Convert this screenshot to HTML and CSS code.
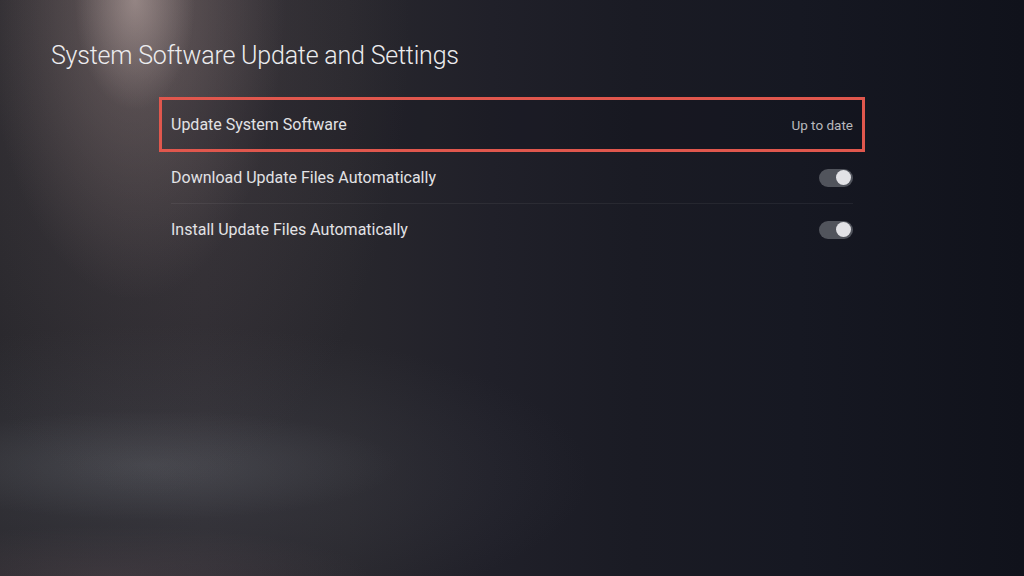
FILE: index.html
```html
<!DOCTYPE html>
<html lang="en">
<head>
<meta charset="utf-8">
<title>System Software Update and Settings</title>
<link rel="stylesheet" href="styles.css">
</head>
<body>
<main class="screen">
  <h1 class="screen-title">System Software Update and Settings</h1>
  <ul class="settings-list">
    <li class="setting-row is-focused">
      <span class="setting-label">Update System Software</span>
      <span class="setting-value">Up to date</span>
    </li>
    <li class="setting-row">
      <span class="setting-label">Download Update Files Automatically</span>
      <span class="toggle is-on"><span class="toggle-knob"></span></span>
    </li>
    <li class="row-divider" aria-hidden="true"></li>
    <li class="setting-row">
      <span class="setting-label">Install Update Files Automatically</span>
      <span class="toggle is-on"><span class="toggle-knob"></span></span>
    </li>
  </ul>
</main>
</body>
</html>
```

FILE: styles.css
```css
* {
  box-sizing: border-box;
}

html,
body {
  margin: 0;
  width: 1024px;
  height: 576px;
  overflow: hidden;
}

body {
  font-family: Roboto, "Open Sans", "Liberation Sans", sans-serif;
  color: #e6e6e9;
  background:
    /* spotlight from the top-left */
    radial-gradient(ellipse 60px 110px at 135px 0px, rgba(195, 176, 172, 0.5), rgba(195, 176, 172, 0) 100%),
    radial-gradient(ellipse 150px 300px at 135px 0px, rgba(150, 130, 128, 0.45), rgba(150, 130, 128, 0) 100%),
    radial-gradient(ellipse 260px 480px at 150px 20px, rgba(100, 88, 90, 0.35), rgba(100, 88, 90, 0) 100%),
    /* haze near the floor */
    radial-gradient(ellipse 250px 55px at 150px 465px, rgba(120, 124, 130, 0.24), rgba(120, 124, 130, 0) 100%),
    radial-gradient(ellipse 430px 150px at 160px 475px, rgba(80, 82, 90, 0.35), rgba(80, 82, 90, 0) 100%),
    radial-gradient(ellipse 260px 50px at 110px 576px, rgba(90, 74, 80, 0.35), rgba(90, 74, 80, 0) 100%),
    /* base wash, dark navy to the right */
    linear-gradient(90deg, #28272c 0%, #2c2a30 20%, #28272d 34%, #202029 48%, #1a1b24 62%, #161822 78%, #10121b 100%);
}

.screen {
  display: flex;
  flex-direction: column;
  padding: 38px 0 0 51px;
}

.screen-title {
  margin: 0;
  font-size: 25px;
  font-weight: 300;
  line-height: 36px;
  letter-spacing: -0.2px;
  color: #ececee;
}

.settings-list {
  list-style: none;
  margin: 23px 0 0 108px;
  padding: 0;
  width: 706px;
  display: flex;
  flex-direction: column;
}

.setting-row {
  height: 51px;
  padding: 0 12px;
  display: flex;
  align-items: center;
  justify-content: space-between;
}

.setting-row.is-focused {
  height: 55px;
  padding: 0 9px;
  border: 3px solid #e0574d;
  background: rgba(16, 16, 24, 0.2);
}

.setting-label {
  font-size: 16px;
  font-weight: 400;
  color: #e2e2e5;
}

.setting-value {
  font-size: 13.5px;
  color: #b9b9bd;
}

.row-divider {
  height: 1px;
  margin: 0 12px;
  background: rgba(255, 255, 255, 0.06);
}

.toggle {
  width: 34px;
  height: 18px;
  border-radius: 9px;
  background: #51545c;
  display: flex;
  align-items: center;
  padding: 0 2px;
}

.toggle.is-on {
  justify-content: flex-end;
}

.toggle-knob {
  width: 15px;
  height: 15px;
  border-radius: 50%;
  background: #e2e2e6;
}
```
